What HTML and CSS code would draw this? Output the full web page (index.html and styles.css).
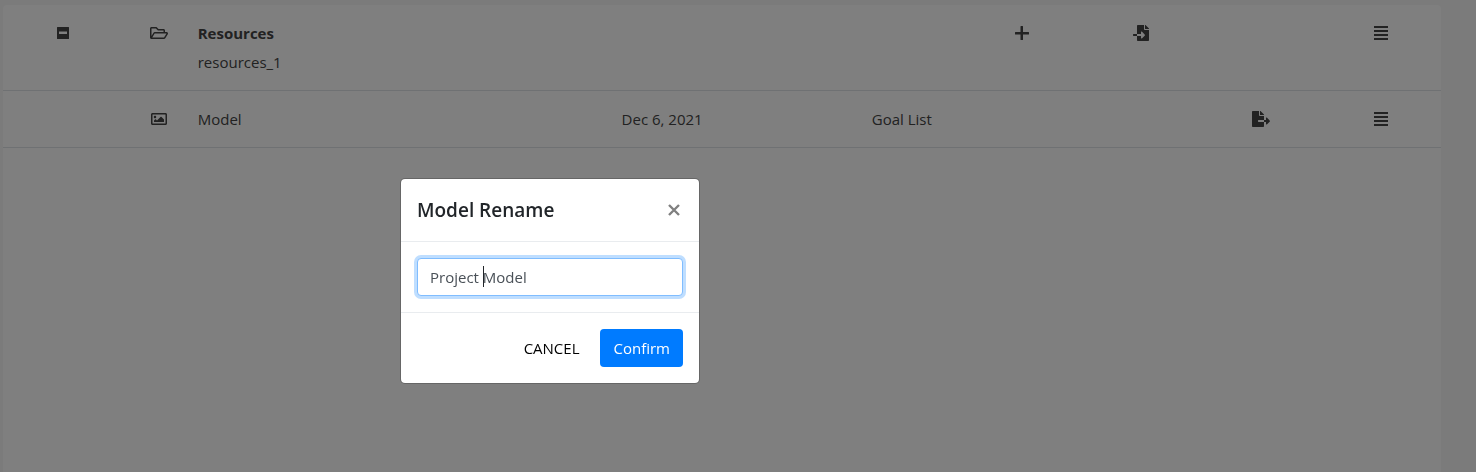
FILE: index.html
```html
<!DOCTYPE html>
<html lang="en">
<head>
<meta charset="utf-8">
<meta name="viewport" content="width=device-width, initial-scale=1">
<title>Resources</title>
<link rel="stylesheet" href="styles.css">
</head>
<body>
<main class="card">
  <table class="items">
    <colgroup>
      <col class="col-unit"><col class="col-kind"><col class="col-name"><col class="col-unit"><col class="col-unit"><col class="col-unit"><col class="col-unit"><col class="col-unit"><col class="col-unit"><col class="col-unit">
    </colgroup>
    <tbody>
      <tr>
        <td><button class="icon-btn" type="button" aria-label="Collapse"><svg class="icon" width="14" height="16" viewBox="0 0 14 16"><path fill-rule="evenodd" d="M1.500 2h11q.5 0 .5.500v11q0 .5-.5.500h-11q-.5 0-.5-.5v-11Q1 2 1.500 2zM3 6.500v2.500h8V6.500z"/></svg></button></td>
        <td><svg class="icon" width="18" height="16" viewBox="0 0 576 512"><path d="M527.9 224H480v-48c0-26.5-21.5-48-48-48H272l-64-64H48C21.5 64 0 85.5 0 112v288c0 26.5 21.5 48 48 48h400c16.5 0 31.9-8.5 40.7-22.6l79.9-128c20-31.9-3-73.4-40.7-73.4zM48 118c0-3.3 2.7-6 6-6h134.1l64 64H426c3.3 0 6 2.7 6 6v42H152c-16.8 0-32.4 8.8-41.1 23.2L48 351.4zm400 282H72l77.2-128H528z"/></svg></td>
        <td class="name"><div class="stack"><strong>Resources</strong><span>resources_1</span></div></td>
        <td></td><td></td><td></td>
        <td><button class="icon-btn" type="button" aria-label="Add"><svg class="icon" width="14" height="16" viewBox="0 0 14 16"><path d="M5.500 1.500q0-.5.5-.5h1.500q.5 0 .5.500V7h5.500q.5 0 .5.500V9q0 .5-.5.500H8V14.500q0 .5-.5.500H6q-.5 0-.5-.5v-5H.5Q0 9.500 0 9V7.500Q0 7 .5 7h5z"/></svg></button></td>
        <td><button class="icon-btn" type="button" aria-label="Import"><svg class="icon" width="16" height="16" viewBox="0 0 512 512"><path d="M16 288c-8.800 0-16 7.200-16 16v32c0 8.800 7.200 16 16 16h112v-64zm489-183L407.100 7c-4.500-4.500-10.600-7-17-7H384v128h128v-6.100c0-6.300-2.500-12.400-7-16.900zm-153 31V0H152c-13.300 0-24 10.700-24 24v264h128v-65.200c0-14.300 17.300-21.400 27.400-11.300L379 308c6.600 6.700 6.600 17.400 0 24l-95.700 96.400c-10.100 10.100-27.400 3-27.400-11.300V352H128v136c0 13.300 10.700 24 24 24h336c13.300 0 24-10.700 24-24V160H376c-13.200 0-24-10.800-24-24z"/></svg></button></td>
        <td></td>
        <td><button class="icon-btn" type="button" aria-label="Menu"><svg class="icon" width="14" height="16" viewBox="0 0 14 16"><path d="M0 1h14v2H0zM0 5h14v2H0zM0 9h14v2H0zM0 13h14v2H0z"/></svg></button></td>
      </tr>
      <tr>
        <td></td>
        <td><svg class="icon" width="16" height="16" viewBox="0 0 512 512"><path d="M464 64H48C21.490 64 0 85.490 0 112v288c0 26.510 21.490 48 48 48h416c26.510 0 48-21.490 48-48V112c0-26.510-21.490-48-48-48zm-6 336H54a6 6 0 0 1-6-6V118a6 6 0 0 1 6-6h404a6 6 0 0 1 6 6v276a6 6 0 0 1-6 6zM128 152c-22.090 0-40 17.910-40 40s17.910 40 40 40 40-17.910 40-40-17.910-40-40-40zM96 352h320v-80l-87.500-87.500c-4.700-4.700-12.300-4.700-17 0L192 304l-39.500-39.500c-4.700-4.700-12.300-4.700-17 0L96 304v48z"/></svg></td>
        <td class="name">Model</td>
        <td>Dec 6, 2021</td>
        <td></td>
        <td>Goal List</td>
        <td></td><td></td>
        <td><button class="icon-btn" type="button" aria-label="Export"><svg class="icon" width="18" height="16" viewBox="0 0 576 512"><path d="M384 121.900c0-6.300-2.500-12.400-7-16.900L279.100 7c-4.500-4.500-10.600-7-17-7H256v128h128zM571 308l-95.700-96.400c-10.100-10.100-27.400-3-27.400 11.300V288h-64v64h64v65.200c0 14.300 17.300 21.400 27.400 11.300L571 332c6.600-6.600 6.600-17.400 0-24zm-379 28v-32c0-8.800 7.200-16 16-16h176V160H248c-13.200 0-24-10.800-24-24V0H24C10.700 0 0 10.700 0 24v464c0 13.300 10.700 24 24 24h336c13.300 0 24-10.700 24-24V352H208c-8.800 0-16-7.200-16-16z"/></svg></button></td>
        <td><button class="icon-btn" type="button" aria-label="Menu"><svg class="icon" width="14" height="16" viewBox="0 0 14 16"><path d="M0 1h14v2H0zM0 5h14v2H0zM0 9h14v2H0zM0 13h14v2H0z"/></svg></button></td>
      </tr>
    </tbody>
  </table>
</main>
<div class="overlay">
  <form class="modal" role="dialog" aria-modal="true" aria-labelledby="modal-title">
    <header class="modal-header">
      <h5 class="modal-title" id="modal-title">Model Rename</h5>
      <button class="close" type="button" aria-label="Close"><svg width="12" height="12" viewBox="0 0 12 12"><path d="M1 1l10 10M11 1l-10 10" fill="none" stroke="currentColor" stroke-width="2.400"/></svg></button>
    </header>
    <div class="modal-body">
      <div class="field-box">
        <input class="field" type="text" value="Project Model" aria-label="Model name" autocomplete="off" spellcheck="false">
        <span class="caret"></span>
      </div>
    </div>
    <footer class="modal-footer">
      <button class="btn" type="button">CANCEL</button>
      <button class="btn btn-primary" type="submit">Confirm</button>
    </footer>
  </form>
</div>
</body>
</html>
```
FILE: styles.css
```css
* { box-sizing: border-box; }
body {
  margin: 0;
  min-height: 100vh;
  display: flex;
  padding: 5px 35px 0 3px;
  background: #f7f7f7;
  color: #444;
  font-family: "Segoe UI", "Open Sans", "Noto Sans", sans-serif;
  font-size: 15px;
  line-height: 24px;
}
.card {
  flex: 1;
  background: #fff;
  border-radius: 4px 4px 0 0;
}
.items {
  width: 100%;
  table-layout: fixed;
  border-collapse: separate;
  border-spacing: 0;
}
.col-unit { width: 8.333%; }
.col-kind { width: 5%; }
.items td {
  padding: 16px 0;
  border-bottom: 1px solid #dee2e6;
  text-align: center;
  vertical-align: top;
}
.items .name {
  padding-left: 3px;
  text-align: left;
}
.stack {
  display: flex;
  flex-direction: column;
  gap: 5px;
}
.icon {
  display: block;
  margin: 4px auto;
  fill: currentColor;
}
.icon-btn {
  display: block;
  margin: 0 auto;
  padding: 0;
  border: 0;
  background: none;
  color: inherit;
}
.overlay {
  position: fixed;
  inset: 0;
  padding: 178px 0 0 400px;
  background: rgba(0, 0, 0, 0.5);
}
.modal {
  width: 300px;
  border: 1px solid rgba(0, 0, 0, 0.2);
  border-radius: 5px;
  background: #fff;
  background-clip: padding-box;
}
.modal-header {
  display: flex;
  align-items: center;
  justify-content: space-between;
  padding: 16px;
  border-bottom: 1px solid #e9ecef;
}
.modal-title {
  margin: 0;
  color: #212529;
  font-size: 19px;
  font-weight: 600;
  line-height: 30px;
}
.close {
  display: flex;
  padding: 4px;
  margin: 0 -1px;
  border: 0;
  background: none;
  color: #808080;
}
.modal-body { padding: 16px; }
.field-box { position: relative; }
.field {
  display: block;
  width: 100%;
  height: 38px;
  padding: 6px 12px;
  border: 1px solid #80bdff;
  border-radius: 4px;
  outline: 0;
  box-shadow: 0 0 0 3px #bfdeff;
  background: #fff;
  color: #495057;
  caret-color: transparent;
  font: inherit;
}
.caret {
  position: absolute;
  top: 8px;
  left: 66px;
  width: 1px;
  height: 21px;
  background: #212529;
}
.modal-footer {
  display: flex;
  justify-content: flex-end;
  gap: 8px;
  padding: 16px;
  border-top: 1px solid #e9ecef;
}
.btn {
  height: 38px;
  padding: 6px 12px;
  border: 1px solid transparent;
  border-radius: 4px;
  background: transparent;
  color: #000;
  font: inherit;
}
.btn-primary {
  background: #007bff;
  color: #fff;
}
```
